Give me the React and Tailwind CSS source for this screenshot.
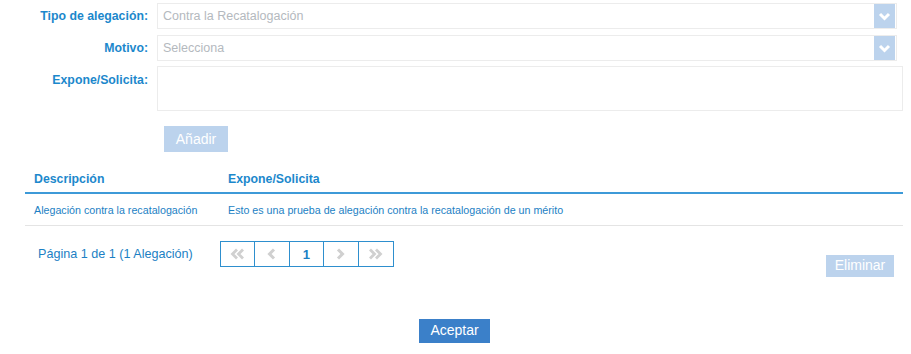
import React from "react";

const Chevron = ({ dir = "down", double = false }) => {
  const paths = {
    down: "M3 5 L7.5 9.5 L12 5",
    left: "M9 2.5 L4.5 7 L9 11.5",
    right: "M5 2.5 L9.5 7 L5 11.5",
  };
  if (double) {
    const a = dir === "left" ? "M8 2.5 L3.5 7 L8 11.5" : "M3 2.5 L7.5 7 L3 11.5";
    const b = dir === "left" ? "M14 2.5 L9.5 7 L14 11.5" : "M9 2.5 L13.5 7 L9 11.5";
    return (
      <svg width="17" height="14" viewBox="0 0 17 14" fill="none" stroke="#d0d0d0" strokeWidth="2.8">
        <path d={a} />
        <path d={b} />
      </svg>
    );
  }
  return (
    <svg width="15" height="14" viewBox="0 0 15 14" fill="none" stroke={dir === "down" ? "#ffffff" : "#d0d0d0"} strokeWidth="3">
      <path d={paths[dir]} />
    </svg>
  );
};

const SelectRow = ({ label, value }) => (
  <div className="flex items-center">
    <label className="w-[148px] text-right text-[12.3px] font-bold text-[#1c88cc]">{label}</label>
    <div className="ml-[9px] flex h-[26px] w-[740px] items-center justify-between border border-[#ececec] bg-white">
      <span className="pl-[5px] text-[12.5px] text-[#b4b9be]">{value}</span>
      <span className="mr-[1px] flex h-[24px] w-[21px] items-center justify-center bg-[#bcd3ed]">
        <Chevron dir="down" />
      </span>
    </div>
  </div>
);

const PageBox = ({ children, active }) => (
  <div className={`flex h-[24px] w-[34.4px] items-center justify-center border-r border-[#2e8fce] last:border-r-0 ${active ? "text-[13px] font-bold text-[#1c7fc4]" : ""}`}>
    {children}
  </div>
);

export default function App() {
  return (
    <div className="h-[354px] w-[911px] bg-white pt-[3px]" style={{ fontFamily: '"Liberation Sans", Arial, sans-serif' }}>
      <div className="flex flex-col">
        <SelectRow label="Tipo de alegación:" value="Contra la Recatalogación" />
        <div className="mt-[6px]">
          <SelectRow label="Motivo:" value="Selecciona" />
        </div>
        <div className="mt-[5px] flex items-start">
          <label className="w-[148px] pt-[5px] text-right text-[12.3px] font-bold text-[#1c88cc]">Expone/Solicita:</label>
          <div className="ml-[9px] h-[45px] w-[746px] border border-[#ececec] bg-white" />
        </div>
      </div>

      <div className="ml-[164px] mt-[15px]">
        <button className="h-[26px] w-[64px] bg-[#bcd3ed] text-[14px] text-white">Añadir</button>
      </div>

      <div className="ml-[25px] mt-[18px] w-[878px]">
        <div className="flex border-b-2 border-[#3d9ad8] pb-[4px] text-[12.3px] font-bold text-[#1c88cc]">
          <div className="w-[203px] pl-[9px]">Descripción</div>
          <div>Expone/Solicita</div>
        </div>
        <div className="flex h-[32px] items-center border-b border-[#e4e4e4] text-[10.7px] text-[#1c7fc4]">
          <div className="w-[203px] pl-[9px]">Alegación contra la recatalogación</div>
          <div>Esto es una prueba de alegación contra la recatalogación de un mérito</div>
        </div>
      </div>

      <div className="mt-[15px] flex items-start">
        <div className="flex h-[26px] w-[220px] items-center pl-[38px] text-[12.6px] text-[#1c7fc4]">Página 1 de 1 (1 Alegación)</div>
        <div className="flex border border-[#2e8fce]">
          <PageBox><Chevron dir="left" double /></PageBox>
          <PageBox><Chevron dir="left" /></PageBox>
          <PageBox active>1</PageBox>
          <PageBox><Chevron dir="right" /></PageBox>
          <PageBox><Chevron dir="right" double /></PageBox>
        </div>
        <div className="ml-auto mr-[17px] mt-[12px]">
          <button className="h-[22px] w-[68px] bg-[#bcd3ed] text-[14px] text-white">Eliminar</button>
        </div>
      </div>

      <div className="ml-[419px] mt-[41px]">
        <button className="h-[24px] w-[71px] bg-[#3b80c9] text-[14px] text-white">Aceptar</button>
      </div>
    </div>
  );
}
